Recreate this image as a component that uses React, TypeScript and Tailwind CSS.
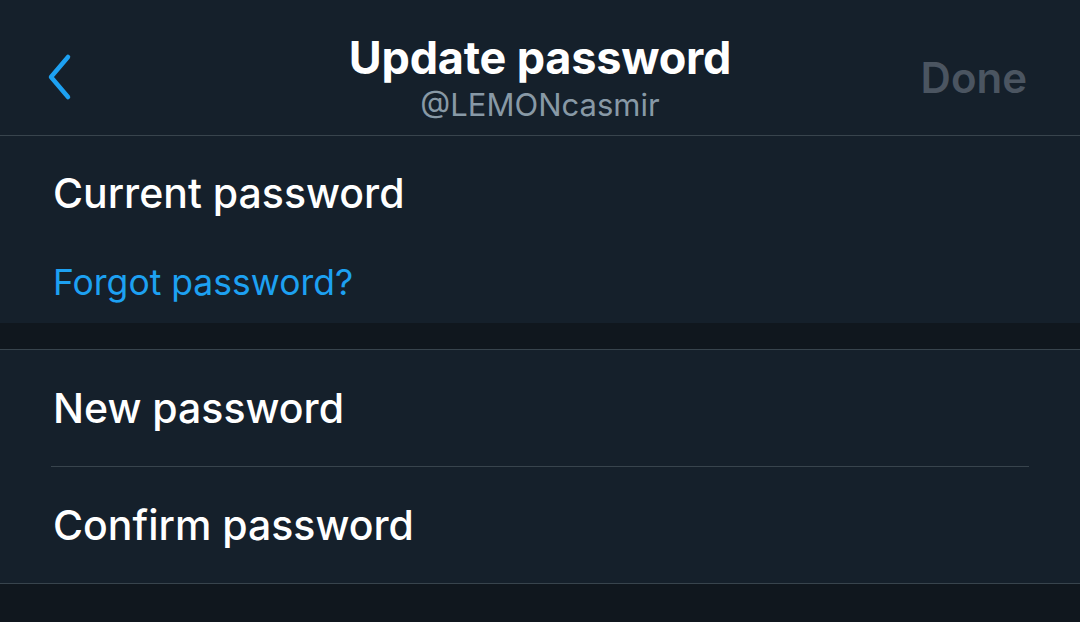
import React from 'react';

const font = { fontFamily: 'Inter, "Noto Sans", sans-serif' };

function BackChevron() {
  return (
    <svg width="28" height="48" viewBox="0 0 28 48" fill="none" className="text-[#1da1f2]">
      <path d="M22 4 L5 24 L22 44" stroke="currentColor" strokeWidth="4.5" strokeLinecap="round" strokeLinejoin="round" />
    </svg>
  );
}

export default function App() {
  return (
    <div className="flex h-[622px] w-[1080px] flex-col overflow-hidden bg-[#10171e] text-white" style={font}>
      {/* Header */}
      <div className="relative h-[136px] shrink-0 border-b border-[#38444d] bg-[#15202b]">
        <div className="absolute left-[46px] top-[53px]">
          <BackChevron />
        </div>
        <div className="flex w-full flex-col items-center pt-[33px]">
          <div className="text-[45px] font-bold leading-[50px] tracking-[-0.2px]">Update password</div>
          <div className="mt-[3px] text-[31px] leading-[38px] text-[#8899a6]">@LEMONcasmir</div>
        </div>
        <div className="absolute right-[53px] top-[52px] text-[42px] font-semibold leading-[52px] text-[#4b5561]">Done</div>
      </div>

      {/* Current password */}
      <div className="flex h-[187px] shrink-0 flex-col bg-[#15202b] px-[53px]">
        <div className="pt-[33px] text-[41px] font-medium leading-[48px]">Current password</div>
        <div className="pt-[45px] text-[35.5px] leading-[42px] text-[#1da1f2]">Forgot password?</div>
      </div>

      <div className="h-[27px] shrink-0 border-b border-[#38444d] bg-[#10171e]" />

      {/* New / Confirm */}
      <div className="flex shrink-0 flex-col border-b border-[#38444d] bg-[#15202b]">
        <div className="mx-[51px] flex h-[117px] items-center border-b border-[#38444d] pl-[2px]">
          <span className="text-[41px] font-medium leading-[48px]">New password</span>
        </div>
        <div className="flex h-[116px] items-center px-[53px]">
          <span className="text-[41px] font-medium leading-[48px]">Confirm password</span>
        </div>
      </div>
    </div>
  );
}
